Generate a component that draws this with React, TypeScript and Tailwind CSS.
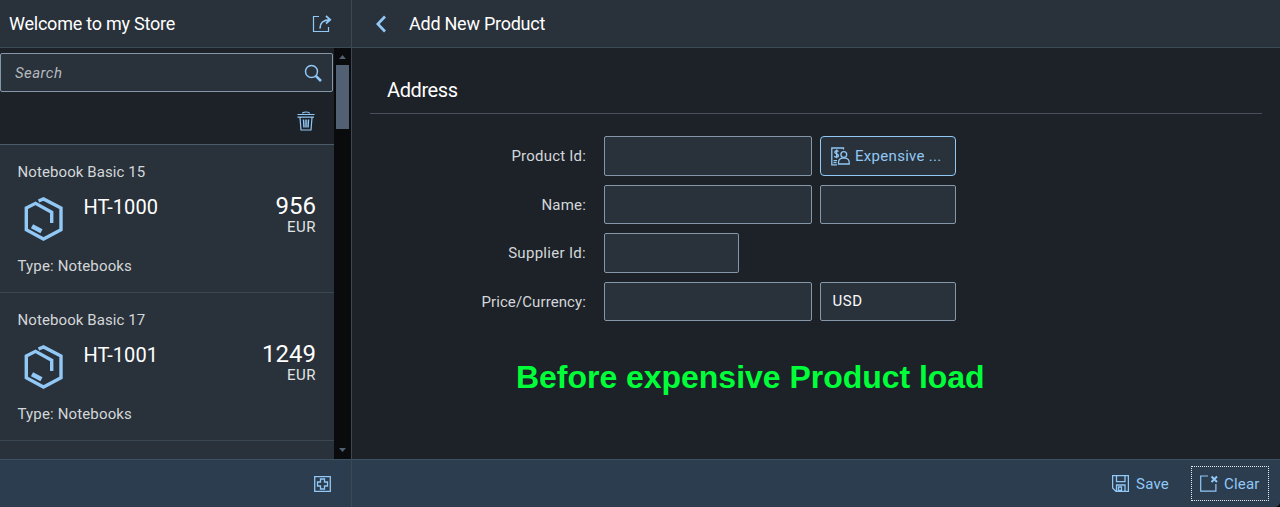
import React from "react";

const products = [
  { name: "Notebook Basic 15", id: "HT-1000", price: "956" },
  { name: "Notebook Basic 17", id: "HT-1001", price: "1249" },
];

function ShareIcon() {
  return (
    <svg width="20" height="18" viewBox="0 0 20 18" fill="none" stroke="#91c8f6" strokeWidth="1.2">
      <path d="M7 1.500H1.500v15h15V12" />
      <path d="M8 13.500c0-6 3-8.700 10-8.700M14 1l4.300 3.800L14 8.500" strokeWidth="1.700" />
    </svg>
  );
}

function SearchIcon() {
  return (
    <svg width="18" height="18" viewBox="0 0 18 18" fill="none" stroke="#91c8f6">
      <circle cx="7.500" cy="7.500" r="6" strokeWidth="1.500" />
      <path d="M11.800 11.800 17 17" strokeWidth="2.600" />
    </svg>
  );
}

function TrashIcon() {
  return (
    <svg width="18" height="20" viewBox="0 0 18 20" fill="none" stroke="#91c8f6" strokeWidth="1.200">
      <path d="M.5 3.500h17M5.500 2.500c0-2 7-2 7 0M.5 6.200h16.500M3 6.500l1 12.500h10l1-12.500" />
      <path d="M6.500 8.500l.5 8M9 8.500v8M11.500 8.500l-.5 8" strokeWidth="1.500" />
    </svg>
  );
}

function ProductIcon() {
  return (
    <svg width="40" height="46" viewBox="0 0 40 46" fill="none" stroke="#91c8f6" strokeWidth="3.400">
      <path d="M14.500 5 19.500 2.900 37 12V33.800L19.500 43 2.300 33.800V12L11.500 7.300 27.700 16.200V27" />
      <path d="M8 30.200 17.500 35.300" strokeWidth="4.500" />
    </svg>
  );
}

function AddIcon() {
  return (
    <svg width="17" height="16" viewBox="0 0 17 16" fill="none" stroke="#91c8f6" strokeWidth="1.300">
      <path d="M.7.600h15.600v14.800H.7z" />
      <path d="M6.500 3h4v3h3v4h-3v3h-4v-3h-3v-4h3z" />
    </svg>
  );
}

function SaveIcon() {
  return (
    <svg width="17" height="17" viewBox="0 0 17 17" fill="none" stroke="#91c8f6" strokeWidth="1.300">
      <path d="M.6.600h15.800v15.800H4L.6 13zM4.500.600v6h8.500v-6M4.500 16V10h8.500v6M6.500 12h3v3.500h-3z" />
    </svg>
  );
}

function ClearIcon() {
  return (
    <svg width="18" height="17" viewBox="0 0 18 17" fill="none" stroke="#91c8f6" strokeWidth="1.200">
      <path d="M8 1H.7v15.200h15.200V9" />
      <path d="M11.500 1.500l5.500 5.500M17 1.500l-5.500 5.500" strokeWidth="2" />
    </svg>
  );
}

function CustomerIcon() {
  return (
    <svg width="19" height="19" viewBox="0 0 19 19" fill="none" stroke="#91c8f6" strokeWidth="1.300">
      <path d="M12.500 2.500V1H.8v16.800H6M2.500 13.700h3.500M2.500 15.700h3" />
      <path d="M7.500 4.500C6.500 3.400 3.800 3.400 3.800 5.200S7.500 6.800 7.500 8.700 4.300 10.500 3.200 9.200M5.600 2.500v8.800" />
      <circle cx="12.800" cy="7.500" r="2.900" />
      <path d="M7.500 17v-1.500c0-2 1.500-3.800 3.500-4.300h3.700c2 .5 3.500 2.300 3.500 4.300V17z" />
    </svg>
  );
}

const field = "shrink-0 rounded-[2px] border border-[#8696a9] bg-[#29313a]";
const label = "w-[234px] shrink-0 pr-[18px] text-right text-[15px] text-[#d3d7d9]";

export default function App() {
  return (
    <div className="h-[507px] w-[1280px] overflow-hidden bg-black font-['Roboto','Liberation_Sans',sans-serif] text-[#fafafa]">
      <div className="flex h-full overflow-hidden rounded-br-[5px] bg-[#1d2229]">
        <aside className="flex w-[352px] shrink-0 flex-col border-r border-[#3d4854]">
          <header className="flex h-12 shrink-0 items-center justify-between border-b border-[#3d4b57] bg-[#29313a] pr-[19px] pl-[9px]">
            <h1 className="text-[18px] tracking-[-0.23px] text-white">Welcome to my Store</h1>
            <ShareIcon />
          </header>
          <div className="flex min-h-0 flex-1">
            <div className="flex w-[334px] shrink-0 flex-col overflow-hidden">
              <div className="mt-[5px] flex h-[39px] w-[333px] shrink-0 items-center justify-between rounded-[2px] border border-[#8696a9] bg-[#29313a] pr-[10px] pl-[14px]">
                <span className="pt-px text-[15px] tracking-[0.45px] text-[#b5babf] italic">Search</span>
                <SearchIcon />
              </div>
              <div className="flex h-[52px] shrink-0 items-center justify-end pt-[6px] pr-[19px]">
                <TrashIcon />
              </div>
              <div className="h-px shrink-0 bg-[#4b5b6c]" />
              {products.map((p) => (
                <article key={p.id} className="flex h-[148px] shrink-0 flex-col border-b border-[#3b4853] bg-[#29313a] pt-4 pr-[18px] pl-[17.500px]">
                  <h2 className="text-[15px] leading-[22px] tracking-[0.09px] text-[#d3d7d9]">{p.name}</h2>
                  <div className="mt-[13px] flex h-[47px]">
                    <div className="ml-[6px] w-[60px]"><ProductIcon /></div>
                    <div className="text-[20px] leading-[22px] tracking-[0.05px] text-white">{p.id}</div>
                    <div className="ml-auto text-right">
                      <div className="text-[24px] leading-[21px] text-white">{p.price}</div>
                      <div className="text-[15px] leading-[20px] tracking-[0.5px] text-[#e0e3e6]">EUR</div>
                    </div>
                  </div>
                  <p className="mt-[12px] text-[15px] leading-[22px] tracking-[0.15px] text-[#d3d7d9]">Type: Notebooks</p>
                </article>
              ))}
              <div className="flex-1 bg-[#29313a]" />
            </div>
            <div className="flex w-[17px] flex-col items-center bg-[#0a0b0d] pt-[7px] pb-[7px]">
              <svg width="7" height="4" viewBox="0 0 7 4" fill="#526074"><path d="M0 4 3.500 0 7 4z" /></svg>
              <div className="mt-[6px] h-16 w-[13px] bg-[#526074]" />
              <svg className="mt-auto" width="7" height="4" viewBox="0 0 7 4" fill="#526074"><path d="M0 0h7L3.500 4z" /></svg>
            </div>
          </div>
          <footer className="flex h-12 shrink-0 items-center justify-end border-t border-[#3d5163] bg-[#2c3d4f] pr-5">
            <AddIcon />
          </footer>
        </aside>
        <main className="flex min-w-0 flex-1 flex-col">
          <header className="flex h-12 shrink-0 items-center border-b border-[#3d4b57] bg-[#29313a] pl-6">
            <svg width="11" height="18" viewBox="0 0 11 18" fill="none" stroke="#91c8f6" strokeWidth="2.700"><path d="M9 1.500 1.800 9 9 16.500" /></svg>
            <h1 className="ml-[22px] text-[18px] tracking-[-0.25px] text-white">Add New Product</h1>
          </header>
          <section className="min-h-0 flex-1 px-[18px]">
            <h2 className="flex h-[66px] items-center border-b border-[#4b515c] pt-[18px] pl-[17px] text-[20px] tracking-[-0.4px] text-white">Address</h2>
            <div className="flex flex-col gap-[9px] pt-[22px]">
              <div className="flex h-10 items-center">
                <div className={`${label} tracking-[0.2px]`}>Product Id:</div>
                <div className={`${field} h-10 w-[208px]`} />
                <button className="ml-2 flex h-10 w-[136px] items-center rounded-[4px] border border-[#91c8f6] bg-[#29313a] pl-[10px] text-[15px] text-[#91c8f6]">
                  <CustomerIcon /><span className="ml-[5px] tracking-[0.3px]">Expensive ...</span>
                </button>
              </div>
              <div className="flex h-[39px] items-center">
                <div className={`${label} pt-px tracking-[0.2px]`}>Name:</div>
                <div className={`${field} h-[39px] w-[208px]`} />
                <div className={`${field} ml-2 h-[39px] w-[136px]`} />
              </div>
              <div className="flex h-10 items-center">
                <div className={`${label} tracking-[0.3px]`}>Supplier Id:</div>
                <div className={`${field} h-10 w-[135px]`} />
              </div>
              <div className="flex h-[39px] items-center">
                <div className={`${label} pt-px tracking-[0.1px]`}>Price/Currency:</div>
                <div className={`${field} h-[39px] w-[208px]`} />
                <div className={`${field} ml-2 flex h-[39px] w-[136px] items-center pl-[11.500px] text-[15px] tracking-[0.5px]`}>USD</div>
              </div>
            </div>
            <p className="mt-[37px] ml-[146px] font-['Liberation_Sans',sans-serif] text-[32px] leading-[38px] font-bold tracking-[-0.03px] whitespace-nowrap text-[#00ff38]">Before expensive Product load</p>
          </section>
          <footer className="flex h-12 shrink-0 items-center justify-end border-t border-[#3d5163] bg-[#2c3d4f] pr-[11px] text-[15px] text-[#91c8f6]">
            <button className="flex items-center gap-[7px]"><SaveIcon /><span className="pt-px tracking-[0.2px]">Save</span></button>
            <button className="ml-[22px] flex h-[35px] w-[78px] items-center gap-[6px] border border-dotted border-[#e8edf2] pl-2"><ClearIcon /><span className="pt-px tracking-[0.2px]">Clear</span></button>
          </footer>
        </main>
      </div>
    </div>
  );
}
